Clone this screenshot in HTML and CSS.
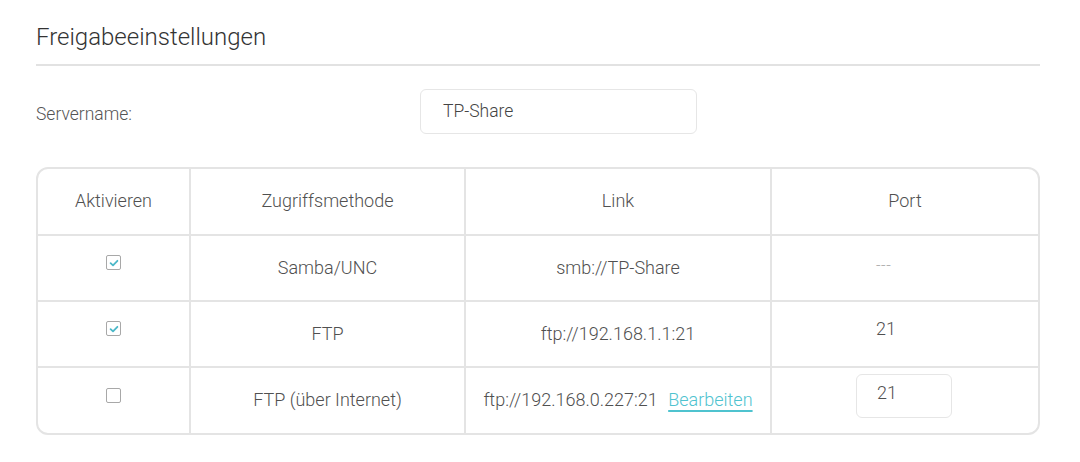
FILE: index.html
```html
<!DOCTYPE html>
<html lang="de">
<head>
<meta charset="utf-8">
<link rel="stylesheet" href="styles.css">
</head>
<body>
<div class="page">
  <h1 class="title">Freigabeeinstellungen</h1>
  <div class="form-row">
    <label class="label">Servername:</label>
    <div class="input">TP-Share</div>
  </div>
  <div class="table-wrap">
    <table class="grid">
      <thead>
        <tr>
          <th class="c1">Aktivieren</th>
          <th class="c2">Zugriffsmethode</th>
          <th class="c3">Link</th>
          <th class="c4">Port</th>
        </tr>
      </thead>
      <tbody>
        <tr>
          <td><span class="cb checked"><svg viewBox="0 0 12 12" width="12" height="12"><path d="M2.6 6.2 L5 8.4 L9.4 3.8" fill="none" stroke="#4cb8c8" stroke-width="1.8" stroke-linecap="round" stroke-linejoin="round"/></svg></span></td>
          <td>Samba/UNC</td>
          <td>smb://TP-Share</td>
          <td class="port"><span class="port-val dash">---</span></td>
        </tr>
        <tr>
          <td><span class="cb checked"><svg viewBox="0 0 12 12" width="12" height="12"><path d="M2.6 6.2 L5 8.4 L9.4 3.8" fill="none" stroke="#4cb8c8" stroke-width="1.8" stroke-linecap="round" stroke-linejoin="round"/></svg></span></td>
          <td>FTP</td>
          <td>ftp://192.168.1.1:21</td>
          <td class="port"><span class="port-val">21</span></td>
        </tr>
        <tr>
          <td><span class="cb"></span></td>
          <td>FTP (über Internet)</td>
          <td>ftp://192.168.0.227:21 <a class="edit">Bearbeiten</a></td>
          <td class="port"><span class="port-input">21</span></td>
        </tr>
      </tbody>
    </table>
  </div>
</div>
</body>
</html>
```

FILE: styles.css
```css
* { box-sizing: border-box; }
html, body { margin: 0; padding: 0; background: #fff; }
body {
  font-family: Roboto, "Noto Sans", "Liberation Sans", sans-serif;
  font-weight: 300;
  color: #595959;
  width: 1080px;
  height: 462px;
  overflow: hidden;
}
.page {
  padding: 22px 40px 0 36px;
}
.title {
  margin: 0;
  font-size: 24px;
  font-weight: 300;
  color: #333;
  line-height: 30px;
  padding-bottom: 12px;
  border-bottom: 2px solid #e2e2e2;
}
.form-row {
  display: flex;
  align-items: center;
  margin-top: 23px;
}
.label {
  width: 384px;
  font-size: 17.5px;
  color: #555;
  padding-top: 4px;
}
.input {
  width: 277px;
  height: 45px;
  border: 1px solid #e6e6e6;
  border-radius: 6px;
  padding-left: 22px;
  padding-bottom: 2px;
  display: flex;
  align-items: center;
  font-size: 17.5px;
  color: #444;
}
.table-wrap {
  margin-top: 33px;
  border: 2px solid #e4e4e4;
  border-radius: 12px;
  overflow: hidden;
  width: 1004px;
}
.grid {
  width: 100%;
  border-collapse: collapse;
  table-layout: fixed;
  font-size: 18px;
}
.grid th, .grid td {
  text-align: center;
  font-weight: 300;
  color: #505050;
  height: 66px;
  padding: 0;
  border-right: 2px solid #e4e4e4;
  border-bottom: 2px solid #e4e4e4;
}
.grid th { padding-bottom: 2px; }
.grid tr > :last-child { border-right: none; }
.grid tbody tr:last-child td { border-bottom: none; }
.grid td { padding-bottom: 2px; }
.c1 { width: 152px; }
.c2 { width: 275px; }
.c3 { width: 306px; }
.c4 { width: auto; }
.cb {
  display: inline-flex;
  align-items: center;
  justify-content: center;
  width: 15px;
  height: 15px;
  border: 1.5px solid #a8a8a8;
  border-radius: 2px;
  vertical-align: middle;
  position: relative;
  top: -6px;
  background: #fff;
}
.cb svg { display: block; }
.port { text-align: left !important; }
.port-val {
  display: inline-block;
  margin-left: 104px;
  position: relative;
  top: -5px;
}
.port-val.dash { color: #aaa; font-size: 16px; letter-spacing: 0.5px; top: -3px; }
.port-input {
  display: inline-flex;
  align-items: center;
  margin-left: 84px;
  width: 96px;
  height: 44px;
  border: 1px solid #e6e6e6;
  border-radius: 6px;
  padding-left: 20px;
  padding-bottom: 6px;
  position: relative;
  top: -4px;
}
.edit {
  color: #4fc3cf;
  text-decoration: underline;
  text-decoration-thickness: 2px;
  text-underline-offset: 4px;
  margin-left: 6px;
}
```
